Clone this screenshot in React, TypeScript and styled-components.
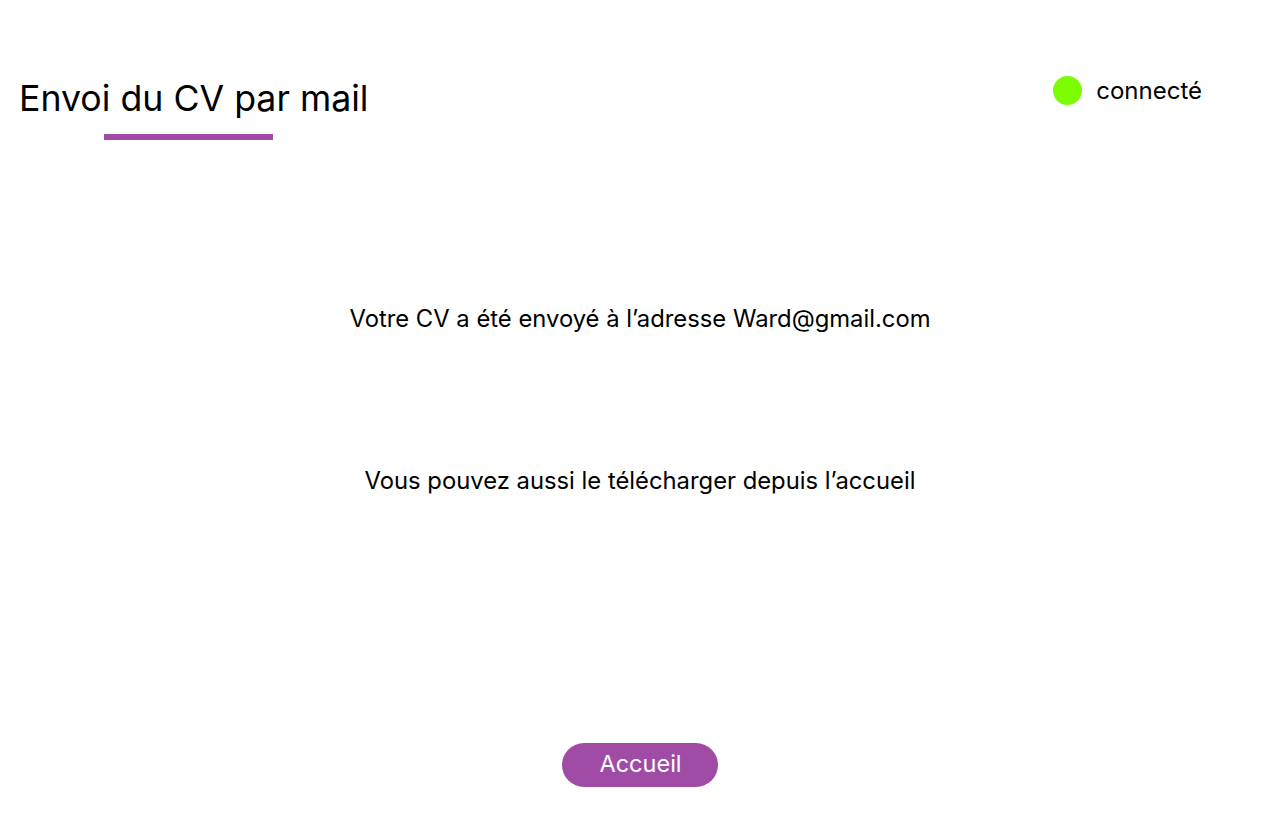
import React from "react";
import styled, { createGlobalStyle } from "styled-components";

const Global = createGlobalStyle`
  html, body { margin: 0; padding: 0; background: #fff; }
  body { font-family: Inter, "Noto Sans", sans-serif; color: #000; }
`;

const Page = styled.div`
  width: 1280px;
  height: 832px;
  display: flex;
  flex-direction: column;
  box-sizing: border-box;
`;

const Header = styled.header`
  display: flex;
  justify-content: space-between;
  align-items: flex-start;
  padding: 76px 78px 0 19px;
`;

const TitleBlock = styled.div`
  display: flex;
  flex-direction: column;
`;

const Title = styled.h1`
  margin: 0;
  font-weight: 400;
  font-size: 35.7px;
  line-height: 44px;
`;

const Underline = styled.div`
  margin: 14px 0 0 85px;
  width: 169px;
  height: 6px;
  background: #a04ba6;
`;

const Status = styled.div`
  display: flex;
  align-items: center;
  gap: 14px;
  font-size: 24px;
  line-height: 29px;
`;

const Dot = styled.span`
  width: 29px;
  height: 29px;
  border-radius: 50%;
  background: #7cfc00;
`;

const Main = styled.main`
  flex: 1;
  display: flex;
  flex-direction: column;
  align-items: center;
  padding-top: 164px;
  gap: 133px;
`;

const Message = styled.p`
  margin: 0;
  font-size: 23.8px;
  line-height: 29px;
`;

const Footer = styled.footer`
  display: flex;
  justify-content: center;
  padding: 0 1px 45px 0;
`;

const Button = styled.button`
  width: 156px;
  height: 44px;
  padding: 0 0 4px 2px;
  border: none;
  border-radius: 22px;
  background: #a04ba6;
  color: #fff;
  font-family: Inter, "Noto Sans", sans-serif;
  font-size: 23.5px;
  cursor: pointer;
`;

export default function App() {
  return (
    <>
      <Global />
      <Page>
        <Header>
          <TitleBlock>
            <Title>Envoi du CV par mail</Title>
            <Underline />
          </TitleBlock>
          <Status>
            <Dot />
            connecté
          </Status>
        </Header>
        <Main>
          <Message>Votre CV a été envoyé à l’adresse Ward@gmail.com</Message>
          <Message>Vous pouvez aussi le télécharger depuis l’accueil</Message>
        </Main>
        <Footer>
          <Button>Accueil</Button>
        </Footer>
      </Page>
    </>
  );
}
